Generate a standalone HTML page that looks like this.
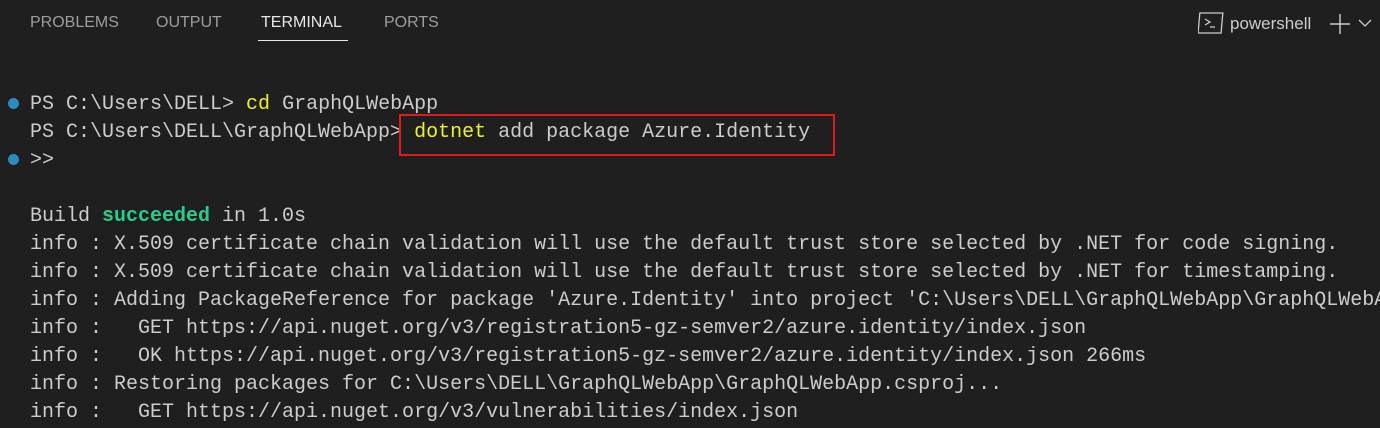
<!DOCTYPE html>
<html><head><meta charset="utf-8"><style>
html,body{margin:0;padding:0;background:#1f1f1f;width:1380px;height:428px;overflow:hidden}
.tabs{position:absolute;top:0;left:0;width:1380px;height:44px;font:16px "Liberation Sans",sans-serif;color:#9d9d9d}
.tab{position:absolute;top:14px}
.act{color:#e7e7e7}
.ul{position:absolute;left:258px;top:40px;width:90px;height:1px;background:#e7e7e7}
.term{position:absolute;left:30px;top:91px;font:20px/28px "Liberation Mono",monospace;color:#cccccc;white-space:pre}
.y{color:#f2f21a}
.g{color:#23d18b;font-weight:bold}
.dot{position:absolute;left:8px;width:11px;height:11px;border-radius:50%;background:#2a8bc0}
.box{position:absolute;left:399px;top:114px;width:432px;height:38px;border:2px solid #e3191c}
</style></head><body>
<div class="tabs">
<span class="tab" style="left:30px">PROBLEMS</span>
<span class="tab" style="left:156px">OUTPUT</span>
<span class="tab act" style="left:261px">TERMINAL</span>
<span class="tab" style="left:384px">PORTS</span>
<div class="ul"></div>
<svg style="position:absolute;left:1198px;top:11px" width="26" height="24" viewBox="0 0 26 24"><rect x="1" y="2" width="23" height="20" fill="none" stroke="#cccccc" stroke-width="1.3" transform="skewX(-5) translate(1,0)"/><path d="M7 8l5 3-5 3M12 16h5" fill="none" stroke="#cccccc" stroke-width="1.3"/></svg>
<span class="tab" style="left:1230px;color:#cccccc;font-size:17px;top:14px">powershell</span>
<svg style="position:absolute;left:1328px;top:12px" width="24" height="24"><path d="M12 2v20M2 12h20" stroke="#cccccc" stroke-width="1.4"/></svg>
<svg style="position:absolute;left:1358px;top:18px" width="14" height="10"><path d="M1 2l6 6 6-6" fill="none" stroke="#cccccc" stroke-width="1.3"/></svg>
</div>
<div class="dot" style="top:98px"></div>
<div class="dot" style="top:154px"></div>
<div class="term">PS C:\Users\DELL&gt; <span class="y">cd</span> GraphQLWebApp
PS C:\Users\DELL\GraphQLWebApp&gt; <span class="y">dotnet</span> add package Azure.Identity
&gt;&gt;

Build <span class="g">succeeded</span> in 1.0s
info : X.509 certificate chain validation will use the default trust store selected by .NET for code signing.
info : X.509 certificate chain validation will use the default trust store selected by .NET for timestamping.
info : Adding PackageReference for package 'Azure.Identity' into project 'C:\Users\DELL\GraphQLWebApp\GraphQLWebA
info :   GET https://api.nuget.org/v3/registration5-gz-semver2/azure.identity/index.json
info :   OK https://api.nuget.org/v3/registration5-gz-semver2/azure.identity/index.json 266ms
info : Restoring packages for C:\Users\DELL\GraphQLWebApp\GraphQLWebApp.csproj...
info :   GET https://api.nuget.org/v3/vulnerabilities/index.json</div>
<div class="box"></div>
</body></html>
